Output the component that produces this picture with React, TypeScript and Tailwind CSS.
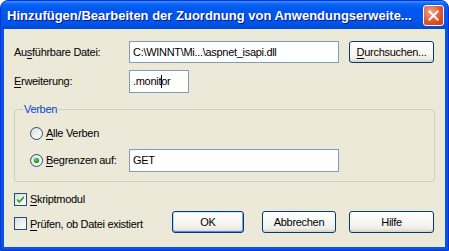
import type { ReactNode } from "react";

const uiFont = "font-['Liberation_Sans',Arial,sans-serif]";

function Mn({ children }: { children: ReactNode }) {
  return <span className="underline decoration-1 underline-offset-[2px]">{children}</span>;
}

function TextBox({ className, children }: { className: string; children?: ReactNode }) {
  return (
    <div
      className={`flex items-center border border-[#7F9DB9] bg-white pl-[3px] text-[11px] tracking-[-0.3px] text-black ${className}`}
    >
      {children}
    </div>
  );
}

function XpButton({ className, children, isDefault }: { className: string; children: ReactNode; isDefault?: boolean }) {
  return (
    <button
      className={`flex items-center justify-center rounded-[3px] border border-[#003C74] bg-[linear-gradient(to_bottom,#FFFFFF_0%,#F6F5F0_60%,#ECEBE4_85%,#D6D0C5_100%)] text-[11px] tracking-[-0.3px] text-black ${
        isDefault ? "shadow-[inset_0_1px_0_#CEE7FF,inset_0_-1px_0_#6982EE,inset_1px_0_0_#B9D1FA,inset_-1px_0_0_#7A9AF0]" : ""
      } ${className}`}
    >
      {children}
    </button>
  );
}

function Radio({ checked }: { checked?: boolean }) {
  return (
    <svg width="13" height="13" viewBox="0 0 13 13" className="shrink-0">
      <defs>
        <linearGradient id={checked ? "rg1" : "rg0"} x1="0" y1="0" x2="1" y2="1">
          <stop offset="0" stopColor="#DCDCD7" />
          <stop offset="1" stopColor="#FFFFFF" />
        </linearGradient>
      </defs>
      <circle cx="6.5" cy="6.5" r="6" fill={`url(#${checked ? "rg1" : "rg0"})`} stroke="#1C5180" strokeWidth="1" />
      {checked && (
        <>
          <circle cx="6.5" cy="6.5" r="2.6" fill="#21A121" />
          <circle cx="6" cy="6" r="1" fill="#7BE37B" />
        </>
      )}
    </svg>
  );
}

function Check({ checked }: { checked?: boolean }) {
  return (
    <svg width="13" height="13" viewBox="0 0 13 13" className="shrink-0">
      <defs>
        <linearGradient id="cg" x1="0" y1="0" x2="1" y2="1">
          <stop offset="0" stopColor="#DCDCD7" />
          <stop offset="1" stopColor="#FFFFFF" />
        </linearGradient>
      </defs>
      <rect x="0.5" y="0.5" width="12" height="12" fill="url(#cg)" stroke="#1C5180" />
      {checked && <path d="M3 5.5 L5.2 7.8 L10 3 L10 5.2 L5.2 10 L3 7.8 Z" fill="#21A121" />}
    </svg>
  );
}

export default function App() {
  return (
    <div className={`h-[251px] w-[449px] bg-white ${uiFont}`}>
      <div className="flex h-full flex-col rounded-t-[8px] border border-[#0831D9] bg-[#0555E5]">
        <div className="flex h-[28px] shrink-0 items-center rounded-t-[7px] bg-[linear-gradient(to_bottom,#3D95FF_0px,#0A66F5_3px,#0058EE_8px,#0055E8_22px,#0048D8_28px)] pl-[6px] pr-[4px]">
          <span className="pt-px text-[13px] font-bold text-white [text-shadow:1px_1px_0_#0A1883]">
            Hinzufügen/Bearbeiten der Zuordnung von Anwendungserweite...
          </span>
          <div className="ml-auto flex h-[21px] w-[21px] items-center justify-center rounded-[3px] border border-white bg-[radial-gradient(circle_at_35%_30%,#F0A48C_0%,#E0572F_55%,#C43A14_100%)]">
            <svg width="11" height="11" viewBox="0 0 11 11">
              <path d="M1.5 1.5 L9.5 9.5 M9.5 1.5 L1.5 9.5" stroke="white" strokeWidth="2" strokeLinecap="square" />
            </svg>
          </div>
        </div>

        <div className="mx-[3px] mb-[3px] flex-1 bg-[#ECE9D8] pl-[10px] pt-[12px] text-[11px] tracking-[-0.3px] text-black">
          <div className="flex h-[22px] items-center">
            <span className="w-[115px]">
              Au<Mn>s</Mn>führbare Datei:
            </span>
            <TextBox className="h-[22px] w-[210px]">C:\WINNT\Mi...\aspnet_isapi.dll</TextBox>
            <XpButton className="ml-[10px] h-[22px] w-[85px]">
              <Mn>D</Mn>urchsuchen...
            </XpButton>
          </div>

          <div className="mt-[7px] flex h-[23px] items-center">
            <span className="w-[115px]">
              <Mn>E</Mn>rweiterung:
            </span>
            <TextBox className="h-[23px] w-[60px]">
              .monit
              <span className="mr-[-1px] inline-block h-[13px] w-px bg-black" />
              or
            </TextBox>
          </div>

          <fieldset className="mt-[10px] w-[421px] rounded-[3px] border border-[#D0D0BF] px-0 pb-[9px]">
            <legend className="ml-[8px] px-[1px] leading-[13px] text-[#0046D5]">Verben</legend>
            <div className="mt-[11px] flex h-[13px] items-center pl-[15px]">
              <Radio />
              <span className="ml-[3px]">
                <Mn>A</Mn>lle Verben
              </span>
            </div>
            <div className="mt-[9px] flex h-[23px] items-center pl-[15px]">
              <Radio checked />
              <span className="ml-[3px] w-[83px]">
                <Mn>B</Mn>egrenzen auf:
              </span>
              <TextBox className="h-[23px] w-[210px]">GET</TextBox>
            </div>
          </fieldset>

          <div className="mt-[11px] flex h-[13px] items-center">
            <Check checked />
            <span className="ml-[3px]">
              <Mn>S</Mn>kriptmodul
            </span>
          </div>

          <div className="mt-[5px] flex h-[22px] items-end">
            <div className="mb-[1px] flex w-[158px] items-center">
              <Check />
              <span className="ml-[3px]">
                <Mn>P</Mn>rüfen, ob Datei existiert
              </span>
            </div>
            <XpButton isDefault className="h-[22px] w-[72px]">
              OK
            </XpButton>
            <XpButton className="ml-[18px] h-[22px] w-[74px]">Abbrechen</XpButton>
            <XpButton className="ml-[13px] h-[22px] w-[85px]">Hilfe</XpButton>
          </div>
        </div>
      </div>
    </div>
  );
}
